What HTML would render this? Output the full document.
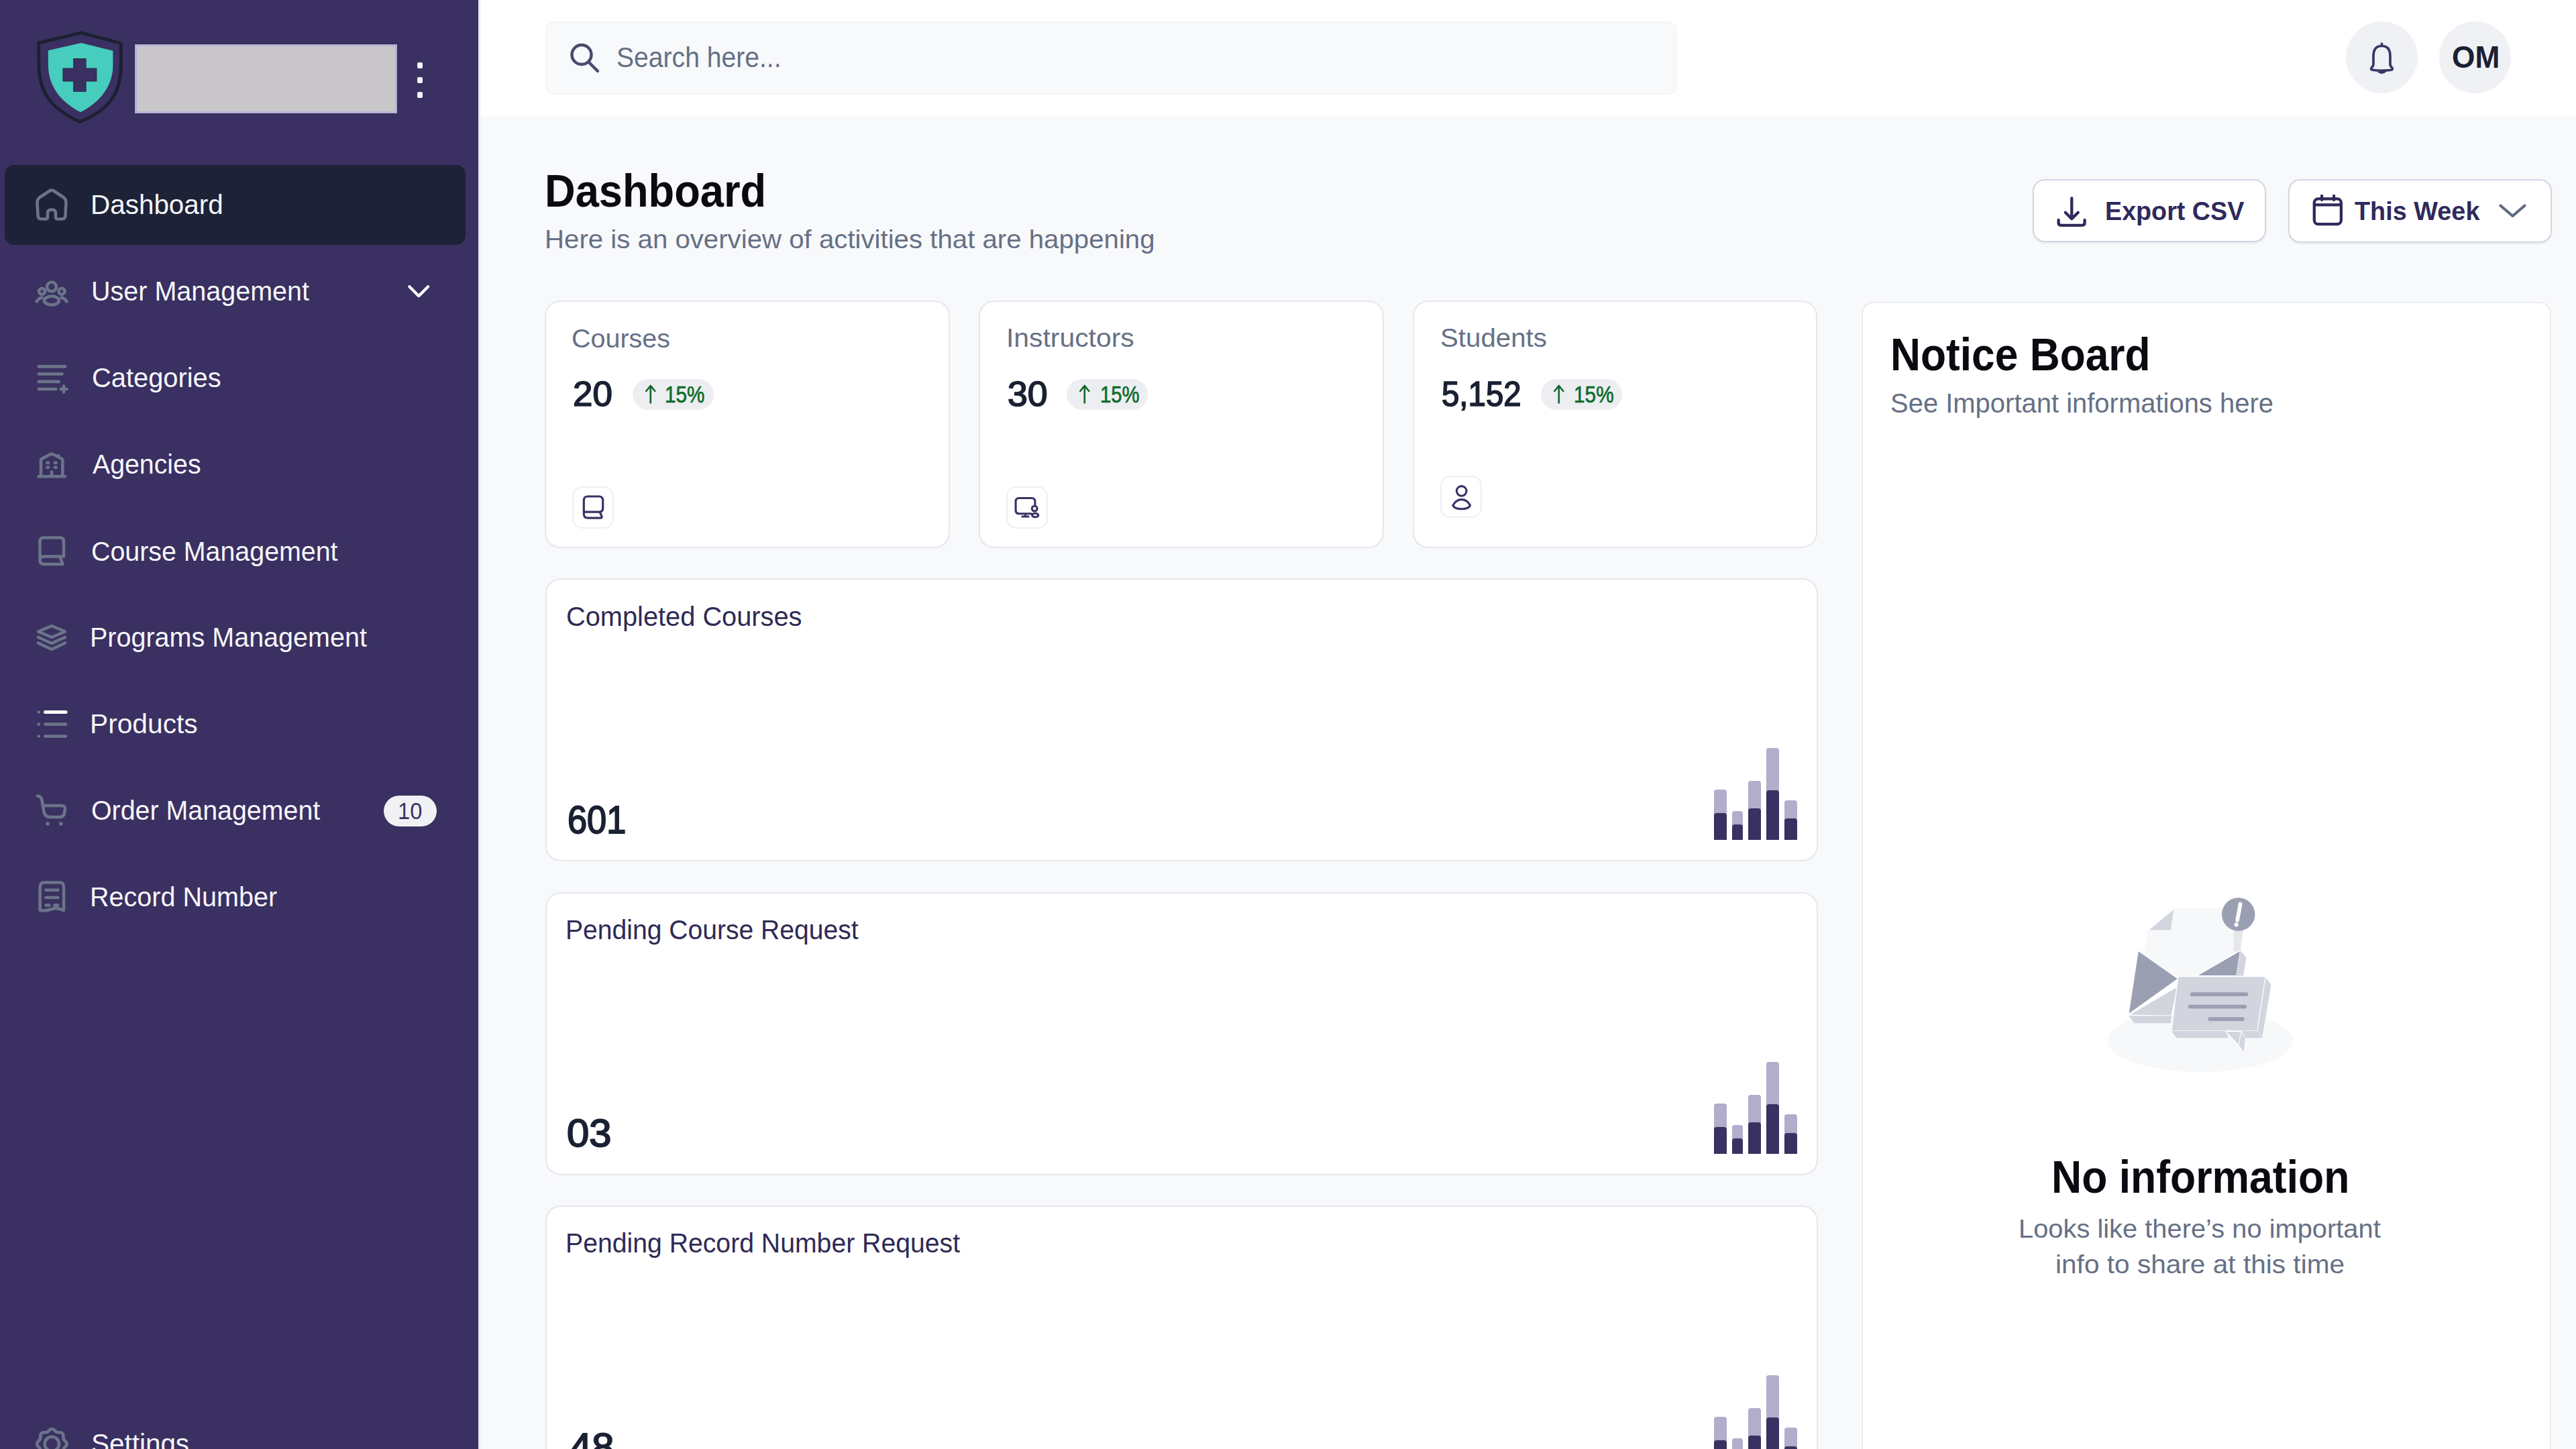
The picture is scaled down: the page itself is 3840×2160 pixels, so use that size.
<!DOCTYPE html>
<html><head><meta charset="utf-8"><style>
html,body{margin:0;padding:0;}
body{width:3840px;height:2160px;overflow:hidden;position:relative;background:#f8f9fb;font-family:"Liberation Sans",sans-serif;}
.t{position:absolute;white-space:nowrap;line-height:1;}
svg{overflow:visible;}
#wrap{position:absolute;left:0;top:0;width:3840px;height:2160px;overflow:hidden;background:#f8f9fb;}
</style></head><body><div id="wrap">
<div style="position:absolute;left:0px;top:0px;width:712.50px;height:2160.00px;background:#3a3061;"></div>
<div style="position:absolute;left:712.5px;top:0px;width:3.00px;height:2160.00px;background:#e9eaf0;"></div>
<div style="position:absolute;left:715.5px;top:0px;width:3124.50px;height:172.00px;background:#ffffff;"></div>
<svg style="position:absolute;left:45px;top:35px;" width="150" height="160" viewBox="45 35 150 160" fill="none">
<path d="M121 48.8 L 57.5 64 L 58 100 Q 59 138 84 160 Q 101 174 119 181.5 Q 139 174 156 160 Q 180 138 180.3 100 L 180.3 64.5 Z" stroke="#1b2133" stroke-width="4.8" stroke-linejoin="round" fill="#3a3061"/>
<path d="M121 64 L 71.7 75.2 L 72 100 Q 73 128 94 149 Q 107 161 120 167.2 Q 133 161 146 149 Q 167 128 168.4 100 L 168.4 75.7 Z" fill="#47cdbd"/>
<path d="M109.8 87.5 H 128 V 102 H 143.8 V 121 H 128 V 136.2 H 109.8 V 121 H 94 V 102 H 109.8 Z" fill="#3a3061" stroke="#2a2a48" stroke-width="1.2"/>
</svg>
<div style="position:absolute;left:201px;top:66.4px;width:391.00px;height:102.60px;background:#c9c7ca;border:3px solid #b5b1d6;box-sizing:border-box;box-shadow:0 0 0 1px rgba(40,36,70,0.5);"></div>
<div style="position:absolute;left:621.5px;top:92.5px;width:8.50px;height:9.00px;background:#f4f4f8;border-radius:2px;"></div>
<div style="position:absolute;left:621.5px;top:114.8px;width:8.50px;height:9.00px;background:#f4f4f8;border-radius:2px;"></div>
<div style="position:absolute;left:621.5px;top:137.2px;width:8.50px;height:9.00px;background:#f4f4f8;border-radius:2px;"></div>
<div style="position:absolute;left:7px;top:246px;width:687.00px;height:118.50px;background:#1d2237;border-radius:14px;"></div>
<svg style="position:absolute;left:45px;top:275px;" width="65" height="60" viewBox="45 275 65 60" fill="none"><path d="M55.5 302 Q 55.5 297 59.5 294 L 74 284.5 Q 77 282.5 80 284.5 L 94.5 294 Q 98.5 297 98.5 302 L 97.5 321 Q 97.5 326.5 92 326.5 L 86 326.5 Q 83 326.5 83 323 L 83 318 Q 83 312.5 77 312.5 Q 71 312.5 71 318 L 71 323 Q 71 326.5 68 326.5 L 62 326.5 Q 56.5 326.5 56.5 321 Z" stroke="#6b7489" stroke-width="4.6" stroke-linecap="round" stroke-linejoin="round"/></svg>
<svg style="position:absolute;left:45px;top:410px;" width="65" height="55" viewBox="45 410 65 55" fill="none"><circle cx="77" cy="427.5" r="7" stroke="#6b7489" stroke-width="4.6" stroke-linecap="round" stroke-linejoin="round"/><circle cx="62.6" cy="434.3" r="4.5" stroke="#6b7489" stroke-width="4.6" stroke-linecap="round" stroke-linejoin="round"/><circle cx="92" cy="434.3" r="4.5" stroke="#6b7489" stroke-width="4.6" stroke-linecap="round" stroke-linejoin="round"/>
<ellipse cx="77" cy="448" rx="11" ry="6.5" stroke="#6b7489" stroke-width="4.6" stroke-linecap="round" stroke-linejoin="round"/><path d="M54.5 449.5 Q 57 445 62.5 443.5 M91.5 443.5 Q 97 445 99.5 449.5" stroke="#6b7489" stroke-width="4.6" stroke-linecap="round" stroke-linejoin="round"/></svg>
<svg style="position:absolute;left:45px;top:535px;" width="65" height="60" viewBox="45 535 65 60" fill="none"><path d="M57.8 546.4 H 97.1 M57.8 557.5 H 92.5 M57.8 568.9 H 87.9 M57.8 580 H 83.3 M95 575.5 V 584.5 M90.5 580 H 99.5" stroke="#6b7489" stroke-width="4.6" stroke-linecap="round" stroke-linejoin="round"/></svg>
<svg style="position:absolute;left:45px;top:665px;" width="65" height="55" viewBox="45 665 65 55" fill="none"><path d="M61 710 V 686 Q 61 684.5 62.5 683.7 L 75.5 677 Q 77.1 676.2 78.7 677 L 91.8 683.7 Q 93.3 684.5 93.3 686 V 710 M57.5 710.2 H 96.8 M77.1 710 V 703.5 M70.3 689.9 H 72.1 M81.8 689.9 H 83.6 M70.3 696.7 H 72.1 M81.8 696.7 H 83.6 M87.3 679 V 681.5" stroke="#6b7489" stroke-width="4.6" stroke-linecap="round" stroke-linejoin="round"/></svg>
<svg style="position:absolute;left:45px;top:790px;" width="65" height="60" viewBox="45 790 65 60" fill="none"><path d="M59.5 832 V 807 Q 59.5 801.5 65 801.5 H 89.5 Q 95 801.5 95 807 V 829.5 H 65 Q 59.5 829.5 59.5 835 Q 59.5 841 65.5 841 H 93.5 L 90 832" stroke="#6b7489" stroke-width="4.6" stroke-linecap="round" stroke-linejoin="round"/></svg>
<svg style="position:absolute;left:45px;top:920px;" width="65" height="60" viewBox="45 920 65 60" fill="none"><path d="M77 933 L 97 941.5 L 77 950 L 57 941.5 Z M57 950 L 77 959 L 97 950 M57 958.5 L 77 968 L 97 958.5" stroke="#6b7489" stroke-width="4.6" stroke-linecap="round" stroke-linejoin="round"/></svg>
<svg style="position:absolute;left:45px;top:1050px;" width="65" height="60" viewBox="45 1050 65 60" fill="none"><path d="M67.5 1061.5 H 98" stroke="#ffffff" stroke-width="5" stroke-linecap="round"/><path d="M57.7 1061.5 H 57.8 M57.7 1079.6 H 57.8 M57.7 1097.5 H 57.8 M67.5 1079.6 H 98 M67.5 1097.5 H 98" stroke="#6b7489" stroke-width="4.6" stroke-linecap="round" stroke-linejoin="round"/></svg>
<svg style="position:absolute;left:45px;top:1175px;" width="65" height="65" viewBox="45 1175 65 65" fill="none"><path d="M56 1186.5 Q 61 1186.5 62.5 1193 L 65.5 1210 Q 67 1218 75 1218 H 89 Q 95 1218 96 1212 L 97 1206 Q 97.5 1201 92.5 1201 H 65" stroke="#6b7489" stroke-width="4.6" stroke-linecap="round" stroke-linejoin="round"/><circle cx="71" cy="1228" r="2.8" fill="#6b7489"/><circle cx="90.8" cy="1228" r="2.8" fill="#6b7489"/></svg>
<svg style="position:absolute;left:45px;top:1305px;" width="65" height="65" viewBox="45 1305 65 65" fill="none"><path d="M59.7 1357 V 1322 Q 59.7 1315.5 66 1315.5 H 89 Q 95 1315.5 95 1322 V 1357 Q 86 1352.5 77.4 1355 Q 68 1358.5 59.7 1357 Z M68.5 1326.7 H 86.5 M68.5 1338 H 86.5 M68.5 1349.4 H 73.5 M81 1349.4 H 86.5" stroke="#6b7489" stroke-width="4.6" stroke-linecap="round" stroke-linejoin="round"/></svg>
<svg style="position:absolute;left:45px;top:2120px;" width="65" height="40" viewBox="45 2120 65 40" fill="none"><path d="M77.3 2130.2 L77.9 2130.2 L78.5 2130.4 L79.0 2130.6 L79.6 2130.8 L80.1 2131.2 L80.6 2131.6 L81.1 2132.0 L81.5 2132.4 L82.0 2132.8 L82.4 2133.3 L82.8 2133.7 L83.3 2134.0 L83.7 2134.4 L84.1 2134.6 L84.6 2134.8 L85.0 2135.0 L85.5 2135.1 L86.1 2135.2 L86.6 2135.2 L87.2 2135.3 L87.8 2135.3 L88.4 2135.3 L89.1 2135.3 L89.7 2135.3 L90.3 2135.4 L90.9 2135.6 L91.5 2135.8 L92.1 2136.0 L92.6 2136.3 L93.0 2136.7 L93.4 2137.1 L93.7 2137.6 L93.9 2138.2 L94.1 2138.8 L94.3 2139.4 L94.4 2140.0 L94.4 2140.6 L94.4 2141.3 L94.4 2141.9 L94.4 2142.5 L94.5 2143.1 L94.5 2143.6 L94.6 2144.2 L94.7 2144.7 L94.9 2145.1 L95.1 2145.6 L95.3 2146.0 L95.7 2146.4 L96.0 2146.9 L96.4 2147.3 L96.9 2147.7 L97.3 2148.2 L97.7 2148.6 L98.1 2149.1 L98.5 2149.6 L98.9 2150.1 L99.1 2150.7 L99.3 2151.2 L99.5 2151.8 L99.5 2152.4 L99.5 2153.0 L99.3 2153.6 L99.1 2154.1 L98.9 2154.7 L98.5 2155.2 L98.1 2155.7 L97.7 2156.2 L97.3 2156.6 L96.9 2157.1 L96.4 2157.5 L96.0 2157.9 L95.7 2158.4 L95.3 2158.8 L95.1 2159.2 L94.9 2159.7 L94.7 2160.1 L94.6 2160.6 L94.5 2161.2 L94.5 2161.7 L94.4 2162.3 L94.4 2162.9 L94.4 2163.5 L94.4 2164.2 L94.4 2164.8 L94.3 2165.4 L94.1 2166.0 L93.9 2166.6 L93.7 2167.2 L93.4 2167.7 L93.0 2168.1 L92.6 2168.5 L92.1 2168.8 L91.5 2169.0 L90.9 2169.2 L90.3 2169.4 L89.7 2169.5 L89.1 2169.5 L88.4 2169.5 L87.8 2169.5 L87.2 2169.5 L86.6 2169.6 L86.1 2169.6 L85.5 2169.7 L85.0 2169.8 L84.6 2170.0 L84.1 2170.2 L83.7 2170.4 L83.3 2170.8 L82.8 2171.1 L82.4 2171.5 L82.0 2172.0 L81.5 2172.4 L81.1 2172.8 L80.6 2173.2 L80.1 2173.6 L79.6 2174.0 L79.0 2174.2 L78.5 2174.4 L77.9 2174.6 L77.3 2174.6 L76.7 2174.6 L76.1 2174.4 L75.6 2174.2 L75.0 2174.0 L74.5 2173.6 L74.0 2173.2 L73.5 2172.8 L73.1 2172.4 L72.6 2172.0 L72.2 2171.5 L71.8 2171.1 L71.3 2170.8 L70.9 2170.4 L70.5 2170.2 L70.0 2170.0 L69.6 2169.8 L69.1 2169.7 L68.5 2169.6 L68.0 2169.6 L67.4 2169.5 L66.8 2169.5 L66.2 2169.5 L65.5 2169.5 L64.9 2169.5 L64.3 2169.4 L63.7 2169.2 L63.1 2169.0 L62.5 2168.8 L62.0 2168.5 L61.6 2168.1 L61.2 2167.7 L60.9 2167.2 L60.7 2166.6 L60.5 2166.0 L60.3 2165.4 L60.2 2164.8 L60.2 2164.2 L60.2 2163.5 L60.2 2162.9 L60.2 2162.3 L60.1 2161.7 L60.1 2161.2 L60.0 2160.6 L59.9 2160.1 L59.7 2159.7 L59.5 2159.2 L59.3 2158.8 L58.9 2158.4 L58.6 2157.9 L58.2 2157.5 L57.7 2157.1 L57.3 2156.6 L56.9 2156.2 L56.5 2155.7 L56.1 2155.2 L55.7 2154.7 L55.5 2154.1 L55.3 2153.6 L55.1 2153.0 L55.1 2152.4 L55.1 2151.8 L55.3 2151.2 L55.5 2150.7 L55.7 2150.1 L56.1 2149.6 L56.5 2149.1 L56.9 2148.6 L57.3 2148.2 L57.7 2147.7 L58.2 2147.3 L58.6 2146.9 L58.9 2146.4 L59.3 2146.0 L59.5 2145.6 L59.7 2145.1 L59.9 2144.7 L60.0 2144.2 L60.1 2143.6 L60.1 2143.1 L60.2 2142.5 L60.2 2141.9 L60.2 2141.3 L60.2 2140.6 L60.2 2140.0 L60.3 2139.4 L60.5 2138.8 L60.7 2138.2 L60.9 2137.6 L61.2 2137.1 L61.6 2136.7 L62.0 2136.3 L62.5 2136.0 L63.1 2135.8 L63.7 2135.6 L64.3 2135.4 L64.9 2135.3 L65.5 2135.3 L66.2 2135.3 L66.8 2135.3 L67.4 2135.3 L68.0 2135.2 L68.5 2135.2 L69.1 2135.1 L69.6 2135.0 L70.0 2134.8 L70.5 2134.6 L70.9 2134.4 L71.3 2134.0 L71.8 2133.7 L72.2 2133.3 L72.6 2132.8 L73.1 2132.4 L73.5 2132.0 L74.0 2131.6 L74.5 2131.2 L75.0 2130.8 L75.6 2130.6 L76.1 2130.4 L76.7 2130.2 L77.3 2130.2Z" stroke="#6b7489" stroke-width="4.6" stroke-linecap="round" stroke-linejoin="round"/><circle cx="77.3" cy="2152.4" r="10.7" stroke="#6b7489" stroke-width="4.6" stroke-linecap="round" stroke-linejoin="round"/></svg>
<svg style="position:absolute;left:600px;top:415px;" width="50" height="40" viewBox="600 415 50 40" fill="none"><path d="M610.3 427.3 L 624.2 441.3 L 638.1 427.3" stroke="#ffffff" stroke-width="4.3" stroke-linecap="round" stroke-linejoin="round"/></svg>
<div style="position:absolute;left:571.9px;top:1185.7px;width:79.20px;height:46.10px;background:#f0f1f4;border-radius:23px;"></div>
<div style="position:absolute;left:812.7px;top:32.1px;width:1687.30px;height:108.70px;background:#f8f9fb;border-radius:13px;box-shadow:inset 0 0 0 1px #f1f2f5;"></div>
<svg style="position:absolute;left:840px;top:55px;" width="60" height="60" viewBox="840 55 60 60" fill="none"><circle cx="867" cy="81.5" r="14.5" stroke="#4a4a6e" stroke-width="4.5"/><path d="M878 93 L 891 106" stroke="#4a4a6e" stroke-width="4.5" stroke-linecap="round"/></svg>
<div style="position:absolute;left:3497px;top:32px;width:107.00px;height:107.00px;background:#f0f1f4;border-radius:50%;"></div>
<svg style="position:absolute;left:3520px;top:55px;" width="60" height="60" viewBox="3520 55 60 60" fill="none"><path d="M3538 96 V 83.5 Q 3538 68.5 3550.5 68.5 Q 3563 68.5 3563 83.5 V 96 Q 3563 98 3565 100 Q 3567.5 102.5 3565.5 104 Q 3550.5 106.5 3535.5 104 Q 3533.5 102.5 3536 100 Q 3538 98 3538 96 Z M3550.5 65 V 67.5 M3546 106.5 Q 3550.5 109.5 3555 106.5" stroke="#3a3566" stroke-width="3.7" stroke-linecap="round" stroke-linejoin="round"/></svg>
<div style="position:absolute;left:3636px;top:32px;width:107.00px;height:107.00px;background:#f0f1f4;border-radius:50%;"></div>
<div style="position:absolute;left:3030.1px;top:266.8px;width:347.80px;height:94.70px;background:#fff;border:2.5px solid #d3d5e2;border-radius:18px;box-sizing:border-box;box-shadow:0 2px 3px rgba(16,24,40,0.06);"></div>
<svg style="position:absolute;left:3055px;top:285px;" width="65" height="60" viewBox="3055 285 65 60" fill="none"><path d="M3088.3 295.5 V 325.5 M3078.8 316.8 L 3088.3 326.3 L 3097.8 316.8 M3068.6 328 V 332 Q 3068.6 335.8 3072.4 335.8 H 3103.8 Q 3107.6 335.8 3107.6 332 V 328" stroke="#2f2a5a" stroke-width="4.3" stroke-linecap="round" stroke-linejoin="round"/></svg>
<div style="position:absolute;left:3411.4px;top:267.1px;width:392.60px;height:94.60px;background:#fff;border:2.5px solid #d3d5e2;border-radius:18px;box-sizing:border-box;box-shadow:0 2px 3px rgba(16,24,40,0.06);"></div>
<svg style="position:absolute;left:3440px;top:285px;" width="60" height="60" viewBox="3440 285 60 60" fill="none"><rect x="3449.8" y="296.3" width="40.1" height="37.9" rx="6" stroke="#2f2a5a" stroke-width="4.3"/><path d="M3450 305.4 H 3489.7 M3461.1 292 V 298 M3479.1 292 V 298" stroke="#2f2a5a" stroke-width="4.3" stroke-linecap="round"/></svg>
<svg style="position:absolute;left:3715px;top:295px;" width="60" height="40" viewBox="3715 295 60 40" fill="none"><path d="M3727.5 306.5 L 3745.5 322 L 3763.5 306.5" stroke="#5f6b80" stroke-width="4.2" stroke-linecap="round" stroke-linejoin="round"/></svg>
<div style="position:absolute;left:812.4px;top:448.3px;width:603.30px;height:368.90px;background:#fff;border:2.8px solid #e4e7ec;border-radius:23px;box-sizing:border-box;"></div>
<div style="position:absolute;left:943.0px;top:565px;width:121.00px;height:45.80px;background:#eceef1;border-radius:23px;"></div>
<svg style="position:absolute;left:953.0px;top:568px;" width="35.0" height="39" viewBox="953.0 568 35.0 39" fill="none"><path d="M969.8 600.5 V 575.5 M963.3 583 L 969.8 575 L 976.3 583" stroke="#16692e" stroke-width="2.7" stroke-linecap="round" stroke-linejoin="round"/></svg>
<div style="position:absolute;left:852.9px;top:724.8px;width:62.50px;height:62.80px;background:#fff;border:2.2px solid #edeff2;border-radius:15px;box-sizing:border-box;"></div>
<div style="position:absolute;left:1459.3px;top:448.3px;width:603.30px;height:368.90px;background:#fff;border:2.8px solid #e4e7ec;border-radius:23px;box-sizing:border-box;"></div>
<div style="position:absolute;left:1590.0px;top:565px;width:121.00px;height:45.80px;background:#eceef1;border-radius:23px;"></div>
<svg style="position:absolute;left:1600.0px;top:568px;" width="35.0" height="39" viewBox="1600.0 568 35.0 39" fill="none"><path d="M1616.8 600.5 V 575.5 M1610.3 583 L 1616.8 575 L 1623.3 583" stroke="#16692e" stroke-width="2.7" stroke-linecap="round" stroke-linejoin="round"/></svg>
<div style="position:absolute;left:1499.8px;top:724.8px;width:62.50px;height:62.80px;background:#fff;border:2.2px solid #edeff2;border-radius:15px;box-sizing:border-box;"></div>
<div style="position:absolute;left:2106.2px;top:448.3px;width:603.30px;height:368.90px;background:#fff;border:2.8px solid #e4e7ec;border-radius:23px;box-sizing:border-box;"></div>
<div style="position:absolute;left:2297.1px;top:565px;width:121.00px;height:45.80px;background:#eceef1;border-radius:23px;"></div>
<svg style="position:absolute;left:2307.1px;top:568px;" width="35.0" height="39" viewBox="2307.1 568 35.0 39" fill="none"><path d="M2323.9 600.5 V 575.5 M2317.4 583 L 2323.9 575 L 2330.4 583" stroke="#16692e" stroke-width="2.7" stroke-linecap="round" stroke-linejoin="round"/></svg>
<div style="position:absolute;left:2146.7px;top:709.3px;width:62.50px;height:62.80px;background:#fff;border:2.2px solid #edeff2;border-radius:15px;box-sizing:border-box;"></div>
<svg style="position:absolute;left:860px;top:730px;" width="50" height="50" viewBox="860 730 50 50" fill="none"><path d="M870.3 763 V 746 Q 870.3 740 876.3 740 H 892.7 Q 898.7 740 898.7 746 V 757.5 Q 898.7 763.1 893 763.1 H 870.3 M870.3 746 V 766 Q 870.3 772.1 876.3 772.1 H 895 Q 897.8 772.1 896.9 769.5 L 894.5 764" stroke="#3a3266" stroke-width="3.2" stroke-linecap="round" stroke-linejoin="round"/></svg>
<svg style="position:absolute;left:1505px;top:730px;" width="55" height="55" viewBox="1505 730 55 55" fill="none"><path d="M1542.9 753 V 747.5 Q 1542.9 742.5 1537.9 742.5 H 1519.1 Q 1514.1 742.5 1514.1 747.5 V 760.7 Q 1514.1 765.7 1519.1 765.7 H 1537.5 M1528.5 766 V 770 M1523.8 770 H 1533.2" stroke="#3a3266" stroke-width="3.1" stroke-linecap="round" stroke-linejoin="round"/><circle cx="1542.2" cy="758.1" r="3.9" stroke="#3a3266" stroke-width="3.1"/><ellipse cx="1543.2" cy="768" rx="4.7" ry="2.7" stroke="#3a3266" stroke-width="3.1"/></svg>
<svg style="position:absolute;left:2160px;top:715px;" width="40" height="55" viewBox="2160 715 40 55" fill="none"><circle cx="2178.7" cy="731.9" r="7.3" stroke="#3a3266" stroke-width="3.1"/><path d="M2165.8 753.5 C 2169 747.5, 2173.5 744.6, 2178.7 744.6 C 2184 744.6, 2188.5 747.5, 2191.6 753.5 C 2190 757, 2185 758.7, 2178.7 758.7 C 2172.5 758.7, 2167.5 757, 2165.8 753.5 Z" stroke="#3a3266" stroke-width="3.1" stroke-linejoin="round"/></svg>
<div style="position:absolute;left:812.5px;top:861.6px;width:1897.10px;height:422.20px;background:#fff;border:2.8px solid #e4e7ec;border-radius:23px;box-sizing:border-box;"></div>
<div style="position:absolute;left:2555px;top:1177.1px;width:19.00px;height:75.10px;background:#b1adcb;border-radius:4px 4px 0 0;"></div>
<div style="position:absolute;left:2555px;top:1211.6px;width:19.00px;height:40.60px;background:#3a3061;border-radius:4px 4px 0 0;"></div>
<div style="position:absolute;left:2582px;top:1209.1px;width:16.00px;height:43.10px;background:#b1adcb;border-radius:4px 4px 0 0;"></div>
<div style="position:absolute;left:2582px;top:1229.0px;width:16.00px;height:23.20px;background:#3a3061;border-radius:4px 4px 0 0;"></div>
<div style="position:absolute;left:2606px;top:1163.5px;width:19.00px;height:88.70px;background:#b1adcb;border-radius:4px 4px 0 0;"></div>
<div style="position:absolute;left:2606px;top:1204.5px;width:19.00px;height:47.70px;background:#3a3061;border-radius:4px 4px 0 0;"></div>
<div style="position:absolute;left:2633px;top:1115.2px;width:19.00px;height:137.00px;background:#b1adcb;border-radius:4px 4px 0 0;"></div>
<div style="position:absolute;left:2633px;top:1178.1px;width:19.00px;height:74.10px;background:#3a3061;border-radius:4px 4px 0 0;"></div>
<div style="position:absolute;left:2660px;top:1193.0px;width:19.00px;height:59.20px;background:#b1adcb;border-radius:4px 4px 0 0;"></div>
<div style="position:absolute;left:2660px;top:1220.4px;width:19.00px;height:31.80px;background:#3a3061;border-radius:4px 4px 0 0;"></div>
<div style="position:absolute;left:812.5px;top:1329.7px;width:1897.10px;height:422.20px;background:#fff;border:2.8px solid #e4e7ec;border-radius:23px;box-sizing:border-box;"></div>
<div style="position:absolute;left:2555px;top:1645.1999999999998px;width:19.00px;height:75.10px;background:#b1adcb;border-radius:4px 4px 0 0;"></div>
<div style="position:absolute;left:2555px;top:1679.6999999999998px;width:19.00px;height:40.60px;background:#3a3061;border-radius:4px 4px 0 0;"></div>
<div style="position:absolute;left:2582px;top:1677.1999999999998px;width:16.00px;height:43.10px;background:#b1adcb;border-radius:4px 4px 0 0;"></div>
<div style="position:absolute;left:2582px;top:1697.1px;width:16.00px;height:23.20px;background:#3a3061;border-radius:4px 4px 0 0;"></div>
<div style="position:absolute;left:2606px;top:1631.6px;width:19.00px;height:88.70px;background:#b1adcb;border-radius:4px 4px 0 0;"></div>
<div style="position:absolute;left:2606px;top:1672.6px;width:19.00px;height:47.70px;background:#3a3061;border-radius:4px 4px 0 0;"></div>
<div style="position:absolute;left:2633px;top:1583.3000000000002px;width:19.00px;height:137.00px;background:#b1adcb;border-radius:4px 4px 0 0;"></div>
<div style="position:absolute;left:2633px;top:1646.1999999999998px;width:19.00px;height:74.10px;background:#3a3061;border-radius:4px 4px 0 0;"></div>
<div style="position:absolute;left:2660px;top:1661.1px;width:19.00px;height:59.20px;background:#b1adcb;border-radius:4px 4px 0 0;"></div>
<div style="position:absolute;left:2660px;top:1688.5px;width:19.00px;height:31.80px;background:#3a3061;border-radius:4px 4px 0 0;"></div>
<div style="position:absolute;left:812.5px;top:1796.8px;width:1897.10px;height:422.20px;background:#fff;border:2.8px solid #e4e7ec;border-radius:23px;box-sizing:border-box;"></div>
<div style="position:absolute;left:2555px;top:2112.2999999999997px;width:19.00px;height:75.10px;background:#b1adcb;border-radius:4px 4px 0 0;"></div>
<div style="position:absolute;left:2555px;top:2146.7999999999997px;width:19.00px;height:40.60px;background:#3a3061;border-radius:4px 4px 0 0;"></div>
<div style="position:absolute;left:2582px;top:2144.2999999999997px;width:16.00px;height:43.10px;background:#b1adcb;border-radius:4px 4px 0 0;"></div>
<div style="position:absolute;left:2582px;top:2164.2px;width:16.00px;height:23.20px;background:#3a3061;border-radius:4px 4px 0 0;"></div>
<div style="position:absolute;left:2606px;top:2098.7px;width:19.00px;height:88.70px;background:#b1adcb;border-radius:4px 4px 0 0;"></div>
<div style="position:absolute;left:2606px;top:2139.7px;width:19.00px;height:47.70px;background:#3a3061;border-radius:4px 4px 0 0;"></div>
<div style="position:absolute;left:2633px;top:2050.4px;width:19.00px;height:137.00px;background:#b1adcb;border-radius:4px 4px 0 0;"></div>
<div style="position:absolute;left:2633px;top:2113.2999999999997px;width:19.00px;height:74.10px;background:#3a3061;border-radius:4px 4px 0 0;"></div>
<div style="position:absolute;left:2660px;top:2128.2px;width:19.00px;height:59.20px;background:#b1adcb;border-radius:4px 4px 0 0;"></div>
<div style="position:absolute;left:2660px;top:2155.6px;width:19.00px;height:31.80px;background:#3a3061;border-radius:4px 4px 0 0;"></div>
<div style="position:absolute;left:2775.2px;top:450.4px;width:1027.80px;height:1949.60px;background:#fff;border:2.2px solid #eaecf0;border-radius:17px;box-sizing:border-box;"></div>
<svg style="position:absolute;left:3100px;top:1300px;" width="360" height="320" viewBox="0 0 1630 1449" fill="none">
<ellipse cx="815" cy="1140" rx="625" ry="210" fill="#f7f8fa"/>
<polygon points="455,395 470,390 640,240 1000,240 1105,390 1085,530 1040,700 420,700" fill="#f7f8fa"/>
<polygon points="1040,390 1105,390 1085,530 1040,540" fill="#e5e7eb"/>
<polygon points="470,390 635,255 615,390" fill="#d2d4de"/>
<polygon points="395,530 665,720 330,960" fill="#9a9fb1" stroke="#ffffff" stroke-width="6" stroke-linejoin="round"/>
<polygon points="1085,530 1060,700 790,700" fill="#9a9fb1" stroke="#ffffff" stroke-width="6"/>
<polygon points="1085,530 1125,575 1105,700 1060,700" fill="#d2d4de"/>
<polygon points="330,965 665,770 620,970" fill="#d2d4de" stroke="#ffffff" stroke-width="6"/>
<polygon points="330,970 620,970 615,1020 370,1020" fill="#d2d4de"/>
<polygon points="665,705 1255,705 1200,1072 620,1072" fill="#d2d4de" stroke="#ffffff" stroke-width="6" stroke-linejoin="round"/>
<polygon points="1255,705 1295,760 1235,1120 1200,1072" fill="#d2d4de" stroke="#ffffff" stroke-width="5"/>
<polygon points="620,1072 985,1072 1005,1120 655,1120" fill="#d2d4de"/>
<polygon points="1090,1072 1200,1072 1235,1120 1120,1120" fill="#d2d4de"/>
<polygon points="985,1075 1090,1075 1075,1170" fill="#d2d4de" stroke="#ffffff" stroke-width="5"/>
<polygon points="1090,1075 1120,1120 1110,1220 1075,1170" fill="#d2d4de" stroke="#ffffff" stroke-width="4"/>
<path d="M760 825 H 1125 M745 908 H 1115 M880 992 H 1100" stroke="#9a9fb1" stroke-width="26" stroke-linecap="round"/>
<circle cx="1072" cy="285" r="112" fill="#9a9fb1"/>
<path d="M1085 215 L 1065 325" stroke="#ffffff" stroke-width="26" stroke-linecap="round"/>
<circle cx="1058" cy="355" r="14" fill="#ffffff"/>
</svg>
<div class="t" style="left:134.50px;top:284.71px;font-size:40.97px;color:#f6f6fa;transform:scaleX(0.9868);transform-origin:0 0;">Dashboard</div>
<div class="t" style="left:135.50px;top:414.01px;font-size:40.97px;color:#f6f6fa;transform:scaleX(0.9642);transform-origin:0 0;">User Management</div>
<div class="t" style="left:136.50px;top:543.11px;font-size:40.97px;color:#f6f6fa;transform:scaleX(0.9725);transform-origin:0 0;">Categories</div>
<div class="t" style="left:137.50px;top:671.71px;font-size:40.97px;color:#f6f6fa;transform:scaleX(0.9583);transform-origin:0 0;">Agencies</div>
<div class="t" style="left:136.00px;top:802.11px;font-size:40.97px;color:#f6f6fa;transform:scaleX(0.9606);transform-origin:0 0;">Course Management</div>
<div class="t" style="left:134.00px;top:930.41px;font-size:40.97px;color:#f6f6fa;transform:scaleX(0.9645);transform-origin:0 0;">Programs Management</div>
<div class="t" style="left:134.00px;top:1059.11px;font-size:40.97px;color:#f6f6fa;transform:scaleX(0.9937);transform-origin:0 0;">Products</div>
<div class="t" style="left:136.00px;top:1188.11px;font-size:40.97px;color:#f6f6fa;transform:scaleX(0.9605);transform-origin:0 0;">Order Management</div>
<div class="t" style="left:134.00px;top:1317.41px;font-size:40.97px;color:#f6f6fa;transform:scaleX(0.9650);transform-origin:0 0;">Record Number</div>
<div class="t" style="left:135.80px;top:2132.11px;font-size:40.97px;color:#f6f6fa;transform:scaleX(0.9868);transform-origin:0 0;">Settings</div>
<div class="t" style="left:593.00px;top:1191.88px;font-size:34.16px;color:#3a3061;transform:scaleX(0.9547);transform-origin:0 0;">10</div>
<div class="t" style="left:919.00px;top:64.61px;font-size:42.15px;color:#667085;transform:scaleX(0.9278);transform-origin:0 0;">Search here...</div>
<div class="t" style="left:812.20px;top:250.85px;font-size:68.80px;color:#0a0a10;font-weight:700;transform:scaleX(0.9186);transform-origin:0 0;">Dashboard</div>
<div class="t" style="left:812.40px;top:337.81px;font-size:38.37px;color:#667085;transform:scaleX(1.0481);transform-origin:0 0;">Here is an overview of activities that are happening</div>
<div class="t" style="left:3655.00px;top:62.50px;font-size:45.35px;color:#1a2133;font-weight:700;transform:scaleX(0.9771);transform-origin:0 0;">OM</div>
<div class="t" style="left:3137.50px;top:294.80px;font-size:39.68px;color:#2f2a5c;font-weight:700;transform:scaleX(0.9500);transform-origin:0 0;">Export CSV</div>
<div class="t" style="left:3510.00px;top:295.20px;font-size:39.68px;color:#2f2a5c;font-weight:700;transform:scaleX(0.9538);transform-origin:0 0;">This Week</div>
<div class="t" style="left:852.00px;top:485.04px;font-size:39.63px;color:#667085;transform:scaleX(0.9959);transform-origin:0 0;">Courses</div>
<div class="t" style="left:1499.50px;top:484.44px;font-size:39.63px;color:#667085;transform:scaleX(1.0310);transform-origin:0 0;">Instructors</div>
<div class="t" style="left:2147.00px;top:484.44px;font-size:39.63px;color:#667085;transform:scaleX(1.0156);transform-origin:0 0;">Students</div>
<div class="t" style="left:853.50px;top:561.89px;font-size:51.50px;color:#1a2133;-webkit-text-stroke:1.7px #1a2133;transform:scaleX(1.0274);transform-origin:0 0;">20</div>
<div class="t" style="left:1501.50px;top:562.29px;font-size:51.50px;color:#1a2133;-webkit-text-stroke:1.7px #1a2133;transform:scaleX(1.0407);transform-origin:0 0;">30</div>
<div class="t" style="left:2149.00px;top:562.29px;font-size:51.50px;color:#1a2133;-webkit-text-stroke:1.7px #1a2133;transform:scaleX(0.9208);transform-origin:0 0;">5,152</div>
<div class="t" style="left:991.00px;top:570.69px;font-size:34.74px;color:#0f6b2c;-webkit-text-stroke:0.7px #0f6b2c;transform:scaleX(0.8547);transform-origin:0 0;">15%</div>
<div class="t" style="left:1639.50px;top:570.69px;font-size:34.74px;color:#0f6b2c;-webkit-text-stroke:0.7px #0f6b2c;transform:scaleX(0.8429);transform-origin:0 0;">15%</div>
<div class="t" style="left:2346.00px;top:570.69px;font-size:34.74px;color:#0f6b2c;-webkit-text-stroke:0.7px #0f6b2c;transform:scaleX(0.8588);transform-origin:0 0;">15%</div>
<div class="t" style="left:844.00px;top:900.37px;font-size:40.31px;color:#2f2a55;transform:scaleX(0.9870);transform-origin:0 0;">Completed Courses</div>
<div class="t" style="left:843.00px;top:1367.07px;font-size:40.31px;color:#2f2a55;transform:scaleX(0.9695);transform-origin:0 0;">Pending Course Request</div>
<div class="t" style="left:843.00px;top:1834.17px;font-size:40.31px;color:#2f2a55;transform:scaleX(0.9723);transform-origin:0 0;">Pending Record Number Request</div>
<div class="t" style="left:846.00px;top:1193.30px;font-size:57.99px;color:#1a2133;-webkit-text-stroke:2.0px #1a2133;transform:scaleX(0.9024);transform-origin:0 0;">601</div>
<div class="t" style="left:845.00px;top:1660.30px;font-size:57.99px;color:#1a2133;-webkit-text-stroke:2.0px #1a2133;transform:scaleX(1.0304);transform-origin:0 0;">03</div>
<div class="t" style="left:849.00px;top:2128.20px;font-size:57.99px;color:#1a2133;-webkit-text-stroke:2.0px #1a2133;transform:scaleX(1.0304);transform-origin:0 0;">48</div>
<div class="t" style="left:2818.40px;top:495.35px;font-size:68.80px;color:#0a0a10;font-weight:700;transform:scaleX(0.9054);transform-origin:0 0;">Notice Board</div>
<div class="t" style="left:2818.20px;top:581.58px;font-size:39.83px;color:#667085;transform:scaleX(1.0035);transform-origin:0 0;">See Important informations here</div>
<div class="t" style="left:3057.50px;top:1720.75px;font-size:68.80px;color:#0a0a10;font-weight:700;transform:scaleX(0.9085);transform-origin:0 0;">No information</div>
<div class="t" style="left:3009.00px;top:1812.69px;font-size:38.52px;color:#667085;transform:scaleX(1.0347);transform-origin:0 0;">Looks like there’s no important</div>
<div class="t" style="left:3064.00px;top:1865.69px;font-size:38.52px;color:#667085;transform:scaleX(1.0542);transform-origin:0 0;">info to share at this time</div>
</div>
<script>(function(){var s=window.innerWidth/3840;if(s>0&&Math.abs(s-1)>0.005){var w=document.getElementById('wrap');w.style.transformOrigin='0 0';w.style.transform='scale('+s+')';document.body.style.width=innerWidth+'px';document.body.style.height=innerHeight+'px';}})();</script>
</body></html>
